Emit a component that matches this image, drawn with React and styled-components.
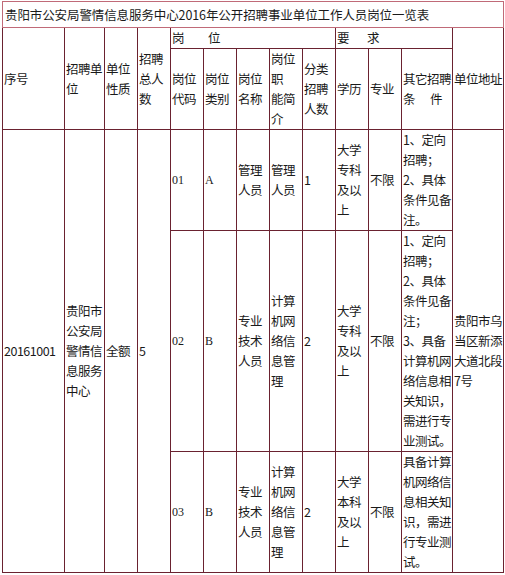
import styled, { createGlobalStyle } from "styled-components";

const GlobalStyle = createGlobalStyle`
  html, body {
    margin: 0;
    padding: 0;
    background: #fff;
  }
  body {
    font-family: "Noto Sans CJK SC", "Noto Sans", sans-serif;
    font-size: 12.5px;
    letter-spacing: -0.5px;
    color: #1a1a1a;
  }
`;

const col_widths = [62, 40, 33, 33, 33, 33, 33, 33, 33, 33, 33, 51, 51];

const rows = [
  {
    code: "01",
    kind: "A",
    name: ["管理", "人员"],
    duty: ["管理", "人员"],
    count: "1",
    edu: ["大学", "专科", "及以", "上"],
    major: "不限",
    other: ["1、定向", "招聘；", "2、具体", "条件见备", "注。"],
  },
  {
    code: "02",
    kind: "B",
    name: ["专业", "技术", "人员"],
    duty: ["计算", "机网", "络信", "息管", "理"],
    count: "2",
    edu: ["大学", "专科", "及以", "上"],
    major: "不限",
    other: [
      "1、定向",
      "招聘；",
      "2、具体",
      "条件见备",
      "注；",
      "3、具备",
      "计算机网",
      "络信息相",
      "关知识，",
      "需进行专",
      "业测试。",
    ],
  },
  {
    code: "03",
    kind: "B",
    name: ["专业", "技术", "人员"],
    duty: ["计算", "机网", "络信", "息管", "理"],
    count: "2",
    edu: ["大学", "本科", "及以", "上"],
    major: "不限",
    other: ["具备计算", "机网络信", "息相关知", "识，需进", "行专业测", "试。"],
  },
];

function Lines({ items }) {
  return items.map((t, i) => (
    <span key={i}>
      {t}
      {i < items.length - 1 && <br />}
    </span>
  ));
}

export default function App() {
  return (
    <Page>
      <GlobalStyle />
      <Table>
        <colgroup>
          {col_widths.map((w, i) => (
            <col key={i} style={{ width: w }} />
          ))}
        </colgroup>
        <tbody>
          <tr>
            <TitleCell colSpan={13}>
              贵阳市公安局警情信息服务中心2016年公开招聘事业单位工作人员岗位一览表
            </TitleCell>
          </tr>
          <tr>
            <Cell rowSpan={2}>序号</Cell>
            <Cell rowSpan={2}>招聘单<br />位</Cell>
            <Cell rowSpan={2}>单位<br />性质</Cell>
            <Cell rowSpan={2}>招聘<br />总人<br />数</Cell>
            <GroupCell colSpan={5}>
              岗<Gap $w={24} />位
            </GroupCell>
            <GroupCell colSpan={3}>
              要<Gap $w={18} />求
            </GroupCell>
            <Cell rowSpan={2}>单位地址</Cell>
          </tr>
          <tr>
            <Cell>岗位<br />代码</Cell>
            <Cell>岗位<br />类别</Cell>
            <Cell>岗位<br />名称</Cell>
            <Cell>岗位<br />职<br />能简<br />介</Cell>
            <Cell>分类<br />招聘<br />人数</Cell>
            <Cell>学历</Cell>
            <Cell>专业</Cell>
            <Cell>其它招聘<br />条<Gap $w={15} />件</Cell>
          </tr>
          {rows.map((r, i) => (
            <tr key={r.code}>
              {i === 0 && (
                <>
                  <Cell rowSpan={3}>20161001</Cell>
                  <Cell rowSpan={3}>
                    <Lines items={["贵阳市", "公安局", "警情信", "息服务", "中心"]} />
                  </Cell>
                  <Cell rowSpan={3}>全额</Cell>
                  <Cell rowSpan={3}>5</Cell>
                </>
              )}
              <CodeCell>{r.code}</CodeCell>
              <CodeCell>{r.kind}</CodeCell>
              <Cell><Lines items={r.name} /></Cell>
              <Cell><Lines items={r.duty} /></Cell>
              <Cell>{r.count}</Cell>
              <Cell><Lines items={r.edu} /></Cell>
              <Cell>{r.major}</Cell>
              <Cell><Lines items={r.other} /></Cell>
              {i === 0 && (
                <Cell rowSpan={3}>
                  <Lines items={["贵阳市乌", "当区新添", "大道北段", "7号"]} />
                </Cell>
              )}
            </tr>
          ))}
        </tbody>
      </Table>
    </Page>
  );
}

const Page = styled.div`
  padding: 1px 0 0 2px;
`;

const Table = styled.table`
  table-layout: fixed;
  width: 501px;
  border-collapse: collapse;
  border: 1px solid #b8606e;
`;

const Cell = styled.td`
  border: 1px solid #6a2230;
  padding: 0 0 0 1px;
  line-height: 20px;
  vertical-align: middle;
  text-align: left;
  white-space: nowrap;
`;

const TitleCell = styled(Cell)`
  height: 25px;
  border-color: #c06a78;
  padding-left: 2px;
  letter-spacing: -0.1px;
`;

const GroupCell = styled(Cell)`
  height: 20px;
`;

const CodeCell = styled(Cell)`
  font-family: "Liberation Serif", serif;
  font-size: 12px;
  letter-spacing: 0;
`;

const Gap = styled.span`
  display: inline-block;
  width: ${(p) => p.$w}px;
`;
